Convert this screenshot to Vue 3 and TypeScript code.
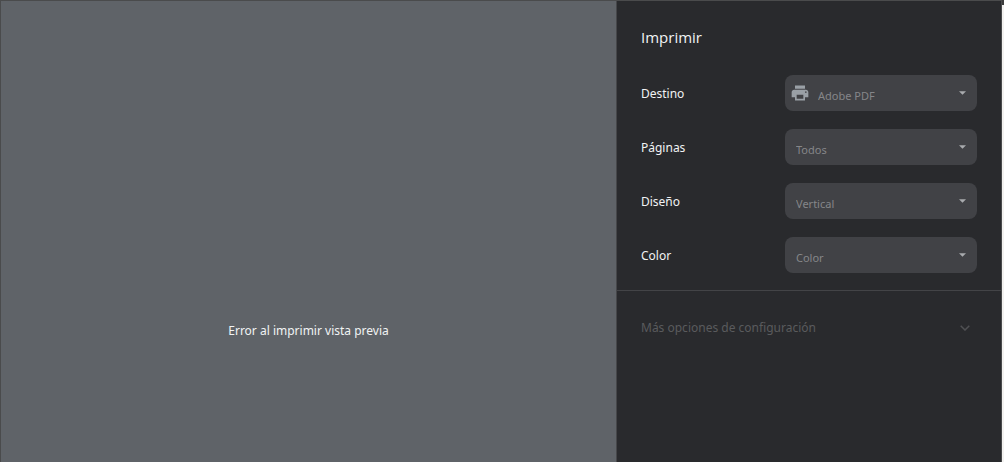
<script setup lang="ts">
interface Setting {
  id: string
  label: string
  value: string
  icon?: boolean
}

const settings: Setting[] = [
  { id: 'destination', label: 'Destino', value: 'Adobe PDF', icon: true },
  { id: 'pages', label: 'Páginas', value: 'Todos' },
  { id: 'layout', label: 'Diseño', value: 'Vertical' },
  { id: 'color', label: 'Color', value: 'Color' },
]
</script>

<template>
  <div class="window">
    <div class="dialog">
      <main class="preview">
        <p class="message">Error al imprimir vista previa</p>
      </main>
      <aside class="sidebar">
        <h1 class="title">Imprimir</h1>
        <form class="settings">
          <div v-for="s in settings" :key="s.id" class="row">
            <label class="label" :for="s.id">{{ s.label }}</label>
            <div class="field">
              <select :id="s.id" class="select" :class="{ 'with-icon': s.icon }" disabled>
                <option>{{ s.value }}</option>
              </select>
              <svg v-if="s.icon" class="printer" viewBox="0 0 24 24" aria-hidden="true">
                <path d="M19 8H5c-1.66 0-3 1.34-3 3v6h4v4h12v-4h4v-6c0-1.66-1.34-3-3-3zm-3 11H8v-5h8v5zm3-7c-.55 0-1-.45-1-1s.45-1 1-1 1 .45 1 1-.45 1-1 1zm-1-9H6v4h12V3z" />
              </svg>
              <svg class="caret" viewBox="0 0 8 4" aria-hidden="true">
                <path d="M0 0h8L4 4z" />
              </svg>
            </div>
          </div>
        </form>
        <button class="more" type="button" disabled>
          <span>Más opciones de configuración</span>
          <svg class="chevron" viewBox="0 0 10 6" aria-hidden="true">
            <path d="M0.7 0.7L5 5L9.3 0.7" />
          </svg>
        </button>
      </aside>
    </div>
    <div class="edge"></div>
  </div>
</template>

<style>
body {
  background: #292a2d;
}
</style>

<style scoped>
.window {
  display: flex;
  min-height: 100vh;
  box-sizing: border-box;
  font-family: "Noto Sans", "Open Sans", sans-serif;
  font-size: 12px;
  line-height: 20px;
  color: #f1f3f4;
}

.dialog {
  flex: 1;
  display: flex;
  box-sizing: border-box;
  border: 1px solid #4a4b4c;
  border-bottom: 0;
}

.edge {
  width: 2px;
  border-top: 5px solid #3c3c3c;
  background: #f3f2f0;
}

.preview {
  flex: 1;
  padding-top: 320px;
  background: #5f6368;
  text-align: center;
}

.message {
  margin: 0;
}

.sidebar {
  width: 384px;
  border-left: 1px solid #46474a;
  background: #292a2d;
}

.title {
  margin: 0;
  padding: 24px 24px 26px;
  font-family: "Open Sans", "Noto Sans", sans-serif;
  font-size: 15px;
  font-weight: 400;
  line-height: 24px;
}

.settings {
  display: flex;
  flex-direction: column;
  gap: 18px;
  padding: 0 24px 17px;
  border-bottom: 1px solid #434447;
}

.row {
  display: flex;
  align-items: center;
}

.label {
  flex: 3;
  padding-top: 2px;
}

.field {
  position: relative;
  flex: 4;
  display: flex;
}

.select {
  width: 100%;
  height: 36px;
  margin: 0;
  padding: 5px 24px 0 11px;
  border: 0;
  border-radius: 8px;
  appearance: none;
  background: #414246;
  color: #858689;
  font: 11px/20px "Noto Sans", "Open Sans", sans-serif;
  opacity: 1;
}

.with-icon {
  padding-left: 33px;
}

.printer {
  position: absolute;
  left: 5px;
  top: 8px;
  width: 20px;
  height: 20px;
  fill: #9aa0a6;
}

.caret {
  position: absolute;
  right: 11px;
  top: 16px;
  width: 7px;
  height: 4px;
  fill: #a9abae;
}

.more {
  display: flex;
  align-items: center;
  justify-content: space-between;
  width: 100%;
  padding: 27px 31px 25px 24px;
  border: 0;
  background: none;
  color: #5a5b5d;
  font: inherit;
  line-height: 20px;
}

.chevron {
  width: 10px;
  height: 6px;
  fill: none;
  stroke: #505154;
  stroke-width: 1.5;
}
</style>
